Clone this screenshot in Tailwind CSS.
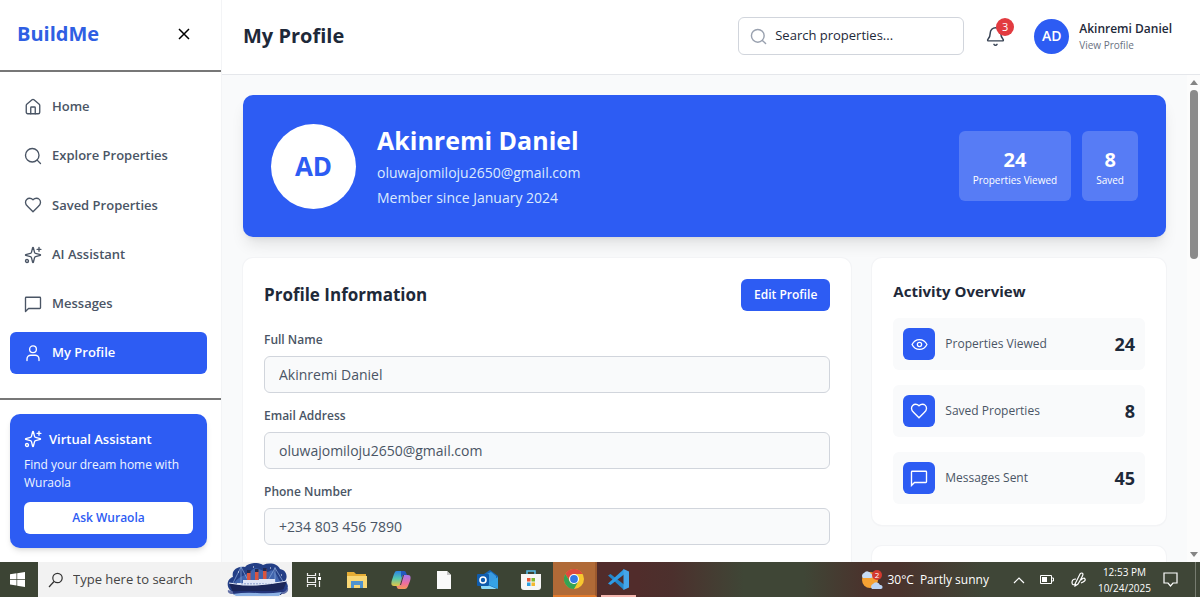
<!DOCTYPE html>
<html lang="en">

<head>
    <meta charset="UTF-8">
    <meta name="viewport" content="width=device-width, initial-scale=1.0">
    <title>BuildMe - My Profile</title>
    <script src="https://cdn.jsdelivr.net/npm/@tailwindcss/browser@4"></script>
</head>

<body class="h-screen flex flex-col overflow-hidden bg-white font-['Segoe_UI','Open_Sans',sans-serif] text-gray-700">

    <!-- Shared icons -->
    <svg class="hidden" xmlns="http://www.w3.org/2000/svg">
        <symbol id="icon-heart" viewBox="0 0 24 24">
            <path d="M19 14c1.49-1.46 3-3.21 3-5.5A5.5 5.5 0 0 0 16.5 3c-1.76 0-3 .5-4.5 2-1.5-1.5-2.74-2-4.5-2A5.5 5.5 0 0 0 2 8.5c0 2.3 1.5 4.05 3 5.5l7 7Z" />
        </symbol>
        <symbol id="icon-message" viewBox="0 0 24 24">
            <path d="M21 3H3a1 1 0 0 0-1 1v18l4-4h15a1 1 0 0 0 1-1V4a1 1 0 0 0-1-1z" />
        </symbol>
        <symbol id="icon-search" viewBox="0 0 24 24">
            <circle cx="11" cy="11" r="9" />
            <path d="m22 22-4.5-4.5" />
        </symbol>
        <symbol id="icon-sparkles" viewBox="0 0 24 24">
            <path d="M9.937 15.5A2 2 0 0 0 8.5 14.063l-6.135-1.582a.5.5 0 0 1 0-.962L8.5 9.936A2 2 0 0 0 9.937 8.5l1.582-6.135a.5.5 0 0 1 .963 0L14.063 8.5A2 2 0 0 0 15.5 9.937l6.135 1.581a.5.5 0 0 1 0 .964L15.5 14.063a2 2 0 0 0-1.437 1.437l-1.582 6.135a.5.5 0 0 1-.963 0z" />
            <path d="M20 2v5M22.5 4.5h-5" />
            <circle cx="4" cy="20" r="2" />
        </symbol>
    </svg>

    <div class="flex flex-1 min-h-0">

        <!-- Sidebar -->
        <aside class="w-[222px] shrink-0 flex flex-col bg-white border-r border-gray-100">
            <div class="h-[72px] shrink-0 flex items-center justify-between pl-[17px] pr-[30px] pb-[2px] border-b-2 border-[#777]">
                <a href="#" class="text-xl leading-7 font-bold text-[#2f5fe3]">BuildMe</a>
                <button aria-label="Close menu" class="text-black">
                    <svg class="size-[14px]" viewBox="0 0 14 14" fill="none" stroke="currentColor" stroke-width="1.5">
                        <path d="m2 2 10 10M12 2 2 12" />
                    </svg>
                </button>
            </div>

            <nav class="flex-1 flex flex-col justify-between pl-[10px] pr-[14px] pt-[14px] pb-6 text-[13px] font-semibold text-gray-600">
                <a href="#" class="h-[42px] flex items-center gap-[10px] px-[14px] rounded-md">
                    <svg class="size-[18px]" viewBox="0 0 24 24" fill="none" stroke="currentColor" stroke-width="1.8" stroke-linejoin="round" stroke-linecap="round">
                        <path d="M15 21v-8a1 1 0 0 0-1-1h-4a1 1 0 0 0-1 1v8" />
                        <path d="M3 10a2 2 0 0 1 .709-1.528l7-6a2 2 0 0 1 2.582 0l7 6A2 2 0 0 1 21 10v9a2 2 0 0 1-2 2H5a2 2 0 0 1-2-2z" />
                    </svg>
                    Home
                </a>
                <a href="#" class="h-[42px] flex items-center gap-[10px] px-[14px] rounded-md">
                    <svg class="size-[18px]" fill="none" stroke="currentColor" stroke-width="1.8" stroke-linecap="round"><use href="#icon-search" /></svg>
                    Explore Properties
                </a>
                <a href="#" class="h-[42px] flex items-center gap-[10px] px-[14px] rounded-md">
                    <svg class="size-[18px]" fill="none" stroke="currentColor" stroke-width="1.8" stroke-linejoin="round"><use href="#icon-heart" /></svg>
                    Saved Properties
                </a>
                <a href="#" class="h-[42px] flex items-center gap-[10px] px-[14px] rounded-md">
                    <svg class="size-[18px]" fill="none" stroke="currentColor" stroke-width="1.8" stroke-linejoin="round" stroke-linecap="round"><use href="#icon-sparkles" /></svg>
                    AI Assistant
                </a>
                <a href="#" class="h-[42px] flex items-center gap-[10px] px-[14px] rounded-md">
                    <svg class="size-[18px]" fill="none" stroke="currentColor" stroke-width="1.8" stroke-linejoin="round"><use href="#icon-message" /></svg>
                    Messages
                </a>
                <a href="#" class="h-[42px] flex items-center gap-[10px] px-[14px] rounded-md bg-[#2d5cf3] text-white">
                    <svg class="size-[18px]" viewBox="0 0 24 24" fill="none" stroke="currentColor" stroke-width="1.8" stroke-linecap="round">
                        <circle cx="12" cy="7" r="4.5" />
                        <path d="M4 22v-2a5 5 0 0 1 5-5h6a5 5 0 0 1 5 5v2" />
                    </svg>
                    My Profile
                </a>
            </nav>

            <div class="shrink-0 border-t-2 border-[#777] pl-[10px] pr-[14px] pt-[14px] pb-[14px]">
                <div class="rounded-[10px] bg-[#2d5cf3] p-[14px] text-white shadow-md">
                    <h2 class="flex items-center gap-[7px] text-[13px] leading-[22px] font-semibold">
                        <svg class="size-[18px]" fill="none" stroke="currentColor" stroke-width="1.8" stroke-linejoin="round" stroke-linecap="round"><use href="#icon-sparkles" /></svg>
                        Virtual Assistant
                    </h2>
                    <p class="mt-[6px] mb-[10px] text-xs leading-[18px] text-blue-50">Find your dream home with Wuraola</p>
                    <button class="w-full h-8 rounded-md bg-white text-xs font-semibold text-[#2d5cf3]">Ask Wuraola</button>
                </div>
            </div>
        </aside>

        <div class="flex-1 min-w-0 flex flex-col">

            <!-- Top bar -->
            <header class="h-[75px] shrink-0 flex items-center pl-[21px] pr-7 pb-[2px] border-b border-gray-200">
                <h1 class="text-xl leading-7 font-bold text-gray-800">My Profile</h1>
                <div class="ml-auto flex items-center">
                    <label class="w-[226px] h-[38px] flex items-center gap-2 px-[11px] rounded-md border border-gray-300">
                        <svg class="size-[17px] shrink-0 text-gray-400" fill="none" stroke="currentColor" stroke-width="2" stroke-linecap="round"><use href="#icon-search" /></svg>
                        <input type="text" aria-label="Search properties" placeholder="Search properties..." class="min-w-0 flex-1 text-[13px] outline-none placeholder:text-gray-800">
                    </label>
                    <button aria-label="Notifications" class="relative ml-[21px] size-[21px] flex items-center justify-center text-gray-700">
                        <svg class="size-[21px]" viewBox="0 0 24 24" fill="none" stroke="currentColor" stroke-width="1.7" stroke-linecap="round" stroke-linejoin="round">
                            <path d="M10.268 21a2 2 0 0 0 3.464 0" />
                            <path d="M3.262 15.326A1 1 0 0 0 4 17h16a1 1 0 0 0 .74-1.673C19.41 13.956 18 12.499 18 8A6 6 0 0 0 6 8c0 4.499-1.411 5.956-2.738 7.326" />
                        </svg>
                        <span class="absolute -top-2 -right-2 size-[18px] rounded-full bg-[#e23b40] text-[11px] leading-[18px] text-center text-white">3</span>
                    </button>
                    <a href="#" class="ml-7 flex items-center gap-[10px]">
                        <span class="size-[35px] rounded-full bg-[#2d5cf3] text-sm font-semibold text-white flex items-center justify-center">AD</span>
                        <span class="flex flex-col">
                            <span class="text-xs leading-[18px] font-semibold text-gray-800">Akinremi Daniel</span>
                            <span class="text-[10px] leading-[14px] text-gray-500">View Profile</span>
                        </span>
                    </a>
                </div>
            </header>

            <div class="flex flex-1 min-h-0">
                <main class="flex-1 min-w-0 overflow-hidden bg-gray-50 px-[21px] pt-5">

                    <!-- Profile banner -->
                    <section class="h-[142px] flex items-center px-7 rounded-[10px] bg-[#2d5cf3] text-white shadow-lg">
                        <div class="size-[85px] shrink-0 rounded-full bg-white text-[26px] font-bold text-[#2d5cf3] flex items-center justify-center">AD</div>
                        <div class="ml-[21px] pb-[2px] text-sm leading-[25px] text-blue-100">
                            <h2 class="text-[25px] leading-10 font-bold text-white">Akinremi Daniel</h2>
                            <p>oluwajomiloju2650@gmail.com</p>
                            <p>Member since January 2024</p>
                        </div>
                        <div class="ml-auto flex gap-[11px] text-center">
                            <div class="h-[70px] px-[14px] pt-1 flex flex-col justify-center rounded-md bg-white/20">
                                <strong class="text-xl leading-6">24</strong>
                                <span class="text-[10px] leading-4">Properties Viewed</span>
                            </div>
                            <div class="h-[70px] px-[14px] pt-1 flex flex-col justify-center rounded-md bg-white/20">
                                <strong class="text-xl leading-6">8</strong>
                                <span class="text-[10px] leading-4">Saved</span>
                            </div>
                        </div>
                    </section>

                    <div class="mt-[21px] grid grid-cols-3 gap-[21px]">

                        <!-- Profile information -->
                        <section class="col-span-2 rounded-[10px] bg-white p-[21px] ring-1 ring-gray-100 shadow-xs">
                            <div class="mb-5 flex items-center justify-between">
                                <h2 class="text-[17px] leading-6 font-bold text-gray-800">Profile Information</h2>
                                <button class="h-8 px-[13px] rounded-md bg-[#2d5cf3] text-xs font-semibold text-white">Edit Profile</button>
                            </div>
                            <form class="flex flex-col gap-[14px] text-sm">
                                <div class="flex flex-col gap-[7px]">
                                    <label for="name" class="text-xs leading-[18px] font-semibold text-gray-600">Full Name</label>
                                    <input id="name" type="text" value="Akinremi Daniel" disabled class="h-[37px] px-[14px] rounded-md border border-gray-300 bg-gray-50 text-gray-600">
                                </div>
                                <div class="flex flex-col gap-[7px]">
                                    <label for="email" class="text-xs leading-[18px] font-semibold text-gray-600">Email Address</label>
                                    <input id="email" type="email" value="oluwajomiloju2650@gmail.com" disabled class="h-[37px] px-[14px] rounded-md border border-gray-300 bg-gray-50 text-gray-600">
                                </div>
                                <div class="flex flex-col gap-[7px]">
                                    <label for="phone" class="text-xs leading-[18px] font-semibold text-gray-600">Phone Number</label>
                                    <input id="phone" type="tel" value="+234 803 456 7890" disabled class="h-[37px] px-[14px] rounded-md border border-gray-300 bg-gray-50 text-gray-600">
                                </div>
                            </form>
                        </section>

                        <div class="flex flex-col gap-[21px]">
                            <!-- Activity overview -->
                            <section class="rounded-[10px] bg-white p-[21px] ring-1 ring-gray-100 shadow-xs">
                                <h2 class="mb-[15px] text-[15px] leading-6 font-bold text-gray-800">Activity Overview</h2>
                                <ul class="flex flex-col gap-[15px] text-xs text-gray-600">
                                    <li class="flex items-center gap-[10px] p-[10px] rounded-md bg-gray-50">
                                        <span class="size-8 flex items-center justify-center rounded-md bg-[#2d5cf3] text-white">
                                            <svg class="size-[17px]" viewBox="0 0 24 24" fill="none" stroke="currentColor" stroke-width="1.8">
                                                <path d="M1.5 12C4 7 8 5 12 5s8 2 10.5 7C20 17 16 19 12 19s-8-2-10.5-7Z" />
                                                <circle cx="12" cy="12" r="3" />
                                            </svg>
                                        </span>
                                        Properties Viewed
                                        <strong class="ml-auto text-lg leading-6 text-gray-800">24</strong>
                                    </li>
                                    <li class="flex items-center gap-[10px] p-[10px] rounded-md bg-gray-50">
                                        <span class="size-8 flex items-center justify-center rounded-md bg-[#2d5cf3] text-white">
                                            <svg class="size-[18px]" fill="none" stroke="currentColor" stroke-width="1.8"><use href="#icon-heart" /></svg>
                                        </span>
                                        Saved Properties
                                        <strong class="ml-auto text-lg leading-6 text-gray-800">8</strong>
                                    </li>
                                    <li class="flex items-center gap-[10px] p-[10px] rounded-md bg-gray-50">
                                        <span class="size-8 flex items-center justify-center rounded-md bg-[#2d5cf3] text-white">
                                            <svg class="size-[18px]" fill="none" stroke="currentColor" stroke-width="1.8"><use href="#icon-message" /></svg>
                                        </span>
                                        Messages Sent
                                        <strong class="ml-auto text-lg leading-6 text-gray-800">45</strong>
                                    </li>
                                </ul>
                            </section>
                            <section class="h-40 rounded-[10px] bg-white ring-1 ring-gray-100"></section>
                        </div>
                    </div>
                </main>

                <!-- Scrollbar -->
                <div class="w-[13px] shrink-0 flex flex-col items-center bg-[#fcfcfc] pt-[5px] pb-[5px]">
                    <svg class="w-2 h-[5px]" viewBox="0 0 8 5"><path d="M0 5 4 0l4 5z" fill="#858585" /></svg>
                    <div class="mt-[5px] w-2 h-[169px] rounded-full bg-[#8b8b8b]"></div>
                    <svg class="mt-auto w-2 h-[5px]" viewBox="0 0 8 5"><path d="M0 0h8L4 5z" fill="#858585" /></svg>
                </div>
            </div>
        </div>
    </div>

    <!-- Taskbar -->
    <footer class="h-[35px] shrink-0 flex items-stretch bg-[linear-gradient(90deg,#3c4434_48%,#502d2b_53%,#4c302d_56%,#3f4636_62%,#3f4636_67%,#4a332d_72%,#4a332d_75%,#3f4637_82%)] text-white">
        <button aria-label="Start" class="w-[38px] pr-1 flex items-center justify-center">
            <svg class="size-[15px]" viewBox="0 0 15 15" fill="#fff"><path d="M0 2.2 6.5 1.3v5.7H0zM7.2 1.2 15 0v7H7.2zM0 7.7h6.5v5.8L0 12.6zM7.2 7.7H15V15l-7.8-1.2z" /></svg>
        </button>
        <label class="w-[254px] flex items-center bg-[#f2f2f2] pl-[10px]">
            <svg class="size-4 shrink-0" viewBox="0 0 16 16" fill="none" stroke="#333" stroke-width="1.2"><circle cx="9.5" cy="6" r="4.7" /><path d="M6 9.5 1 15" /></svg>
            <input type="text" aria-label="Search" placeholder="Type here to search" class="ml-[9px] min-w-0 flex-1 text-[13px] outline-none placeholder:text-[#444]">
            <svg class="w-[64px] h-[34px] shrink-0 mr-[2px]" viewBox="0 0 64 34">
                <path d="M5 28C-1 23 2 15 7 14 5 7 12 3 19 4c4-5 14-5 18-2 7-3 15-1 17 4 7 1 8 9 5 12 4 4 4 8-1 11z" fill="#243f86" />
                <path d="M8 20c7-9 13-7 18-13s13 5 18 1 8 9 12 13z" fill="#4064ad" />
                <path d="M15 4 7 20M15 4l8 15M49 5l-8 14M49 5l9 15M15 3v17M49 4v16" stroke="#9cb8e6" stroke-width=".6" />
                <path d="M21 8h3.500v10H21zM29 7h3.500v11H29zM37 6h3.500v12H37z" fill="#d9553f" />
                <path d="M21 7h3.500v3H21zM29 6h3.500v3H29zM37 5h3.500v3H37z" fill="#222a52" />
                <path d="M17 17h16v-1h16v3h5v4H11v-3h6z" fill="#dfe6f7" />
                <path d="M15 21h38" stroke="#6b83bd" stroke-dasharray="2 1" />
                <path d="M3 20q14 3 28 2t30-4l-6 14H8z" fill="#1b2658" />
                <path d="M3 20q14 3 28 2t30-4" fill="none" stroke="#e4ecfb" />
                <path d="M2 27q5 2 11 1h37l12-3q1 4-4 6H5q-4-1-3-4z" fill="#273b88" opacity=".7" />
                <path d="M7 31q12-2 24-1t25-1l-3 4H10z" fill="#8db2e4" />
                <path d="M12 9h1M27 4h1M55 12h1M44 5h1" stroke="#fff" />
            </svg>
        </label>
        <div class="w-[348px] grid grid-cols-8">
            <button aria-label="Task view" class="flex items-center justify-center">
                <svg class="size-4" viewBox="0 0 16 16" fill="none" stroke="#eee" stroke-width="1.2"><path d="M1.5 1v2.500h8V1M1.5 15v-2.500h8V15M1.5 5.500h8v5h-8zM13.5 1v3M13.5 9v6" /><path d="M12 5h3v3h-3z" fill="#fff" stroke="none" /></svg>
            </button>
            <button aria-label="File Explorer" class="flex items-center justify-center">
                <svg class="w-5 h-[18px]" viewBox="0 0 20 18"><path d="M0 1h7l2 2h10v14H0z" fill="#e5ad35" /><path d="M0 5h20v12H0z" fill="#f8d775" /><path d="M4 10h12v7h-3v-3H7v3H4z" fill="#4f93cf" /></svg>
            </button>
            <button aria-label="Copilot" class="flex items-center justify-center">
                <svg class="size-5" viewBox="0 0 20 20">
                    <defs>
                        <linearGradient id="cp-a" x1="0" y1="0" x2="0" y2="1"><stop stop-color="#2c83e5" /><stop offset=".5" stop-color="#54c7ae" /><stop offset="1" stop-color="#e5c744" /></linearGradient>
                        <linearGradient id="cp-b" x1="0" y1="0" x2="0" y2="1"><stop stop-color="#a576ec" /><stop offset=".6" stop-color="#ef6e9c" /><stop offset="1" stop-color="#f49a55" /></linearGradient>
                    </defs>
                    <path d="M14 5h3c3 0 3 3 2 6l-2 5c-1 2-1 3-4 3H8c-2 0-2-2-3-4h3l3-8c1-2 1-2 3-2z" fill="url(#cp-b)" />
                    <path d="M6 1h7l-4 13c-1 2-1 2-3 2H3c-3 0-3-3-2-6l2-6c1-2 1-3 3-3z" fill="url(#cp-a)" />
                    <path d="M10 1h3c2 0 2 2 3 4h-3c-2 0-2 1-3 3z" fill="#2459bd" />
                    <path d="m12.500 5-3 10" stroke="#3c4434" stroke-width="1" />
                </svg>
            </button>
            <button aria-label="Document" class="flex items-center justify-center">
                <svg class="w-[14px] h-[18px]" viewBox="0 0 14 18"><path d="M0 0h10l4 4v14H0z" fill="#fafafa" /><path d="M10 0v4h4z" fill="#c5c5c5" /></svg>
            </button>
            <button aria-label="Outlook" class="flex items-center justify-center">
                <svg class="w-[22px] h-5" viewBox="0 0 22 20"><path d="m4 6 9-6 8 6v12H4z" fill="#1768b6" /><path d="M8 5l6-3 5 4v6l-7 3z" fill="#3a9be0" /><path d="m21 7-11 7 11 5z" fill="#35a3e6" /><path d="M4 12 20 19H5q-1 0-1-2z" fill="#8bdaf9" /><rect y="4" width="12" height="12" rx="1" fill="#0f5cad" /><circle cx="6" cy="10" r="3" fill="none" stroke="#fff" stroke-width="1.6" /></svg>
            </button>
            <button aria-label="Microsoft Store" class="flex items-center justify-center">
                <svg class="size-5" viewBox="0 0 20 20"><path d="M6 5V1h8v4" fill="none" stroke="#55bce9" stroke-width="1.5" /><path d="M0 4h20v13q0 3-3 3H3q-3 0-3-3z" fill="#f6f6f6" /><path d="M6 8h3.500v3.500H6z" fill="#e75232" /><path d="M10.500 8H14v3.500h-3.500z" fill="#7db82c" /><path d="M6 12.500h3.500V16H6z" fill="#2b9fe0" /><path d="M10.500 12.500H14V16h-3.500z" fill="#f4b92e" /></svg>
            </button>
            <button aria-label="Chrome" class="flex items-center justify-center bg-[#b06a37] border-r-2 border-b-2 border-r-[#9c592e] border-b-[#e07a2c]">
                <svg class="size-5" viewBox="0 0 20 20"><circle cx="10" cy="10" r="10" fill="#f7c72f" /><path d="M1.300 5A10 10 0 0 1 18.700 5H10L6 12.500z" fill="#df4a3d" /><path d="M1.300 5A10 10 0 0 0 10 20l4.300-7.500L10 15l-4-2.500z" fill="#35a354" /><circle cx="10" cy="10" r="5" fill="#fff" /><circle cx="10" cy="10" r="3.900" fill="#3478e5" /></svg>
            </button>
            <button aria-label="Visual Studio Code" class="flex flex-col items-center justify-between pt-[7px] bg-[#512c2b]">
                <svg class="size-[21px]" viewBox="0 0 21 21"><path d="M0 6.500 2.500 5 16 15.500V21z" fill="#2387cc" /><path d="M0 14.500 2.500 16 16 5.500V0z" fill="#2f9be5" /><path d="m15.500 0 5.500 2.500v16L15.500 21z" fill="#45a5ea" /></svg>
                <span class="w-[35px] h-[2px] bg-[#f4b6ae]"></span>
            </button>
        </div>

        <div class="ml-auto flex items-center text-xs">
            <svg class="w-[22px] h-5" viewBox="0 0 22 20"><circle cx="9" cy="10" r="8" fill="#f5a133" /><path d="M2 8a3 3 0 0 1 1-5 4 4 0 0 1 7 1 2 2 0 0 1 0 4z" fill="#c6dcf6" /><path d="M11 19a3 3 0 0 1 1-5 4 4 0 0 1 7 1 2 2 0 0 1 1 4z" fill="#bcd5f5" /><circle cx="16" cy="5" r="5" fill="#d33a2f" /><text x="16" y="8" text-anchor="middle" font-size="8" fill="#fff">2</text></svg>
            <span class="ml-1">30°C</span>
            <span class="ml-[6px]">Partly sunny</span>
            <svg class="ml-6 w-3 h-2" viewBox="0 0 12 8" fill="none" stroke="#fff" stroke-width="1.2"><path d="m1 7 5-5 5 5" /></svg>
            <svg class="ml-[15px] w-[14px] h-[9px]" viewBox="0 0 14 9"><path d="M.5.5h11v8H.5zM12 3h1.500v3H12" fill="none" stroke="#fff" /><path d="M2 2h5v5H2z" fill="#fff" /></svg>
            <svg class="ml-[17px] size-[15px]" viewBox="0 0 15 15" fill="none" stroke="#fff" stroke-width="1.2"><path d="M4 12 9 2q2-2 3 0 0 2-5 10l-3 2zM5 7Q1 7 1 10.500T5 12M10 8q3-3 4-1t-4 4" /></svg>
            <div class="ml-3 text-[10px] leading-4 text-center">
                <div>12:53 PM</div>
                <div>10/24/2025</div>
            </div>
            <button aria-label="Notifications panel" class="ml-3">
                <svg class="size-[15px]" viewBox="0 0 15 15" fill="none" stroke="#fff" stroke-width="1.2"><path d="M1 1h13v10h-4l-2.500 3L5 11H1z" /></svg>
            </button>
            <span class="ml-[17px] mr-1 w-px h-[35px] bg-[#777c70]"></span>
        </div>
    </footer>

</body>

</html>
